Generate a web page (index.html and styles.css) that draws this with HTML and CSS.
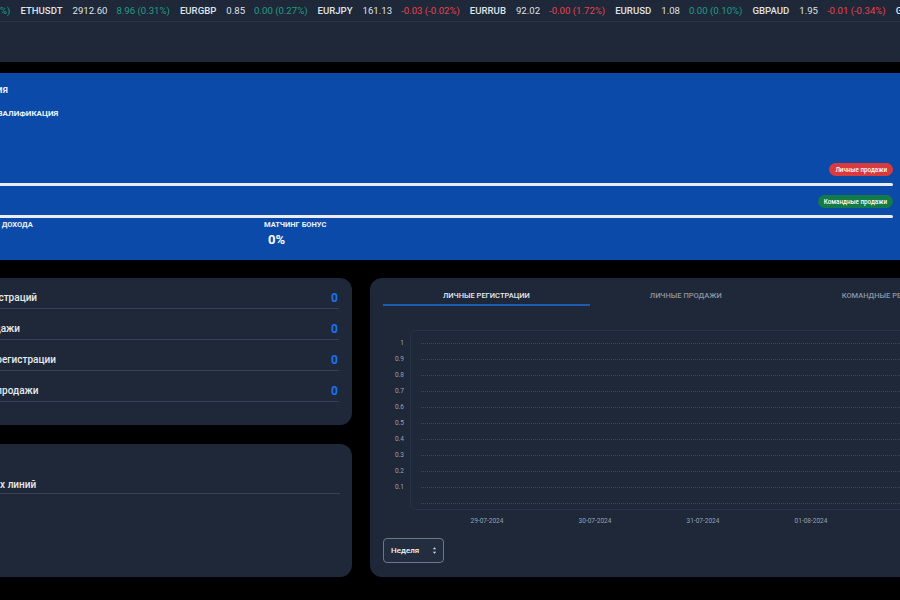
FILE: index.html
```html
<!DOCTYPE html>
<html lang="ru">
<head>
<meta charset="utf-8">
<title>Dashboard</title>
<link rel="stylesheet" href="styles.css">
</head>
<body>
<div class="page">
  <header class="topbar">
    <div class="ticker">
      <div class="tape">
        <div class="tick"><span class="sym">BTCUSDT</span><span class="val">66812.40</span><span class="chg up">120.35 (0.18%)</span></div>
        <div class="tick"><span class="sym">ETHUSDT</span><span class="val">2912.60</span><span class="chg up">8.96 (0.31%)</span></div>
        <div class="tick"><span class="sym">EURGBP</span><span class="val">0.85</span><span class="chg up">0.00 (0.27%)</span></div>
        <div class="tick"><span class="sym">EURJPY</span><span class="val">161.13</span><span class="chg down">-0.03 (-0.02%)</span></div>
        <div class="tick"><span class="sym">EURRUB</span><span class="val">92.02</span><span class="chg down">-0.00 (1.72%)</span></div>
        <div class="tick"><span class="sym">EURUSD</span><span class="val">1.08</span><span class="chg up">0.00 (0.10%)</span></div>
        <div class="tick"><span class="sym">GBPAUD</span><span class="val">1.95</span><span class="chg down">-0.01 (-0.34%)</span></div>
        <div class="tick"><span class="sym">GBPUSD</span><span class="val">1.28</span><span class="chg up">0.00 (0.05%)</span></div>
      </div>
    </div>
  </header>

  <main class="main">
    <section class="qual">
      <div class="q-title">Квалификация</div>
      <div class="q-sub">СЛЕДУЮЩАЯ КВАЛИФИКАЦИЯ</div>
      <div class="badge-row"><span class="badge red">Личные продажи</span></div>
      <div class="bar"></div>
      <div class="badge-row second"><span class="badge green">Командные продажи</span></div>
      <div class="bar"></div>
      <div class="stats">
        <div class="stat"><div class="stat-label">БОНУС ЛИЧНОГО ДОХОДА</div></div>
        <div class="stat"><div class="stat-label">МАТЧИНГ БОНУС</div><div class="stat-val">0%</div></div>
      </div>
    </section>

    <div class="grid">
      <div class="left-col">
        <div class="card list-card">
          <div class="row"><span>Личных регистраций</span><span class="num">0</span></div>
          <div class="row"><span>Личные продажи</span><span class="num">0</span></div>
          <div class="row"><span>Командные регистрации</span><span class="num">0</span></div>
          <div class="row"><span>Командные продажи</span><span class="num">0</span></div>
        </div>
        <div class="card lines-card">
          <div class="row"><span>Число первых линий</span></div>
        </div>
      </div>

      <div class="card chart-card">
        <div class="tabs">
          <div class="tab active">ЛИЧНЫЕ РЕГИСТРАЦИИ</div>
          <div class="tab">ЛИЧНЫЕ ПРОДАЖИ</div>
          <div class="tab">КОМАНДНЫЕ РЕГИСТРАЦИИ</div>
          <div class="tab">КОМАНДНЫЕ ПРОДАЖИ</div>
        </div>
        <div class="chart">
          <div class="yaxis">
            <div>1</div><div>0.9</div><div>0.8</div><div>0.7</div><div>0.6</div>
            <div>0.5</div><div>0.4</div><div>0.3</div><div>0.2</div><div>0.1</div>
          </div>
          <div class="plot">
            <div class="gl"></div><div class="gl"></div><div class="gl"></div><div class="gl"></div>
            <div class="gl"></div><div class="gl"></div><div class="gl"></div><div class="gl"></div>
            <div class="gl"></div><div class="gl"></div><div class="gl"></div>
          </div>
        </div>
        <div class="xaxis">
          <div class="xl">29-07-2024</div>
          <div class="xl">30-07-2024</div>
          <div class="xl">31-07-2024</div>
          <div class="xl">01-08-2024</div>
          <div class="xl">02-08-2024</div>
        </div>
        <div class="select">
          <span>Неделя</span>
          <svg class="arrows" width="5" height="9" viewBox="0 0 5 9">
            <path d="M0.8 3.2 L2.5 1.2 L4.2 3.2 Z" fill="#d8dce3"/>
            <path d="M0.8 5.8 L2.5 7.8 L4.2 5.8 Z" fill="#d8dce3"/>
          </svg>
        </div>
      </div>
    </div>
  </main>
</div>
</body>
</html>
```

FILE: styles.css
```css
* { box-sizing: border-box; }

html, body {
  margin: 0;
  padding: 0;
  background: #000;
  width: 900px;
  height: 600px;
  overflow: hidden;
  font-family: Roboto, "Noto Sans", "Liberation Sans", sans-serif;
}

.page {
  margin-left: -74px;
  width: 1150px;
}

/* ---------- top bar / ticker ---------- */
.topbar {
  height: 62px;
  background: #1e2839;
}

.ticker {
  height: 22px;
  border-bottom: 1px solid #2a3446;
  overflow: hidden;
}

.tape {
  display: flex;
  align-items: center;
  height: 21px;
  white-space: nowrap;
  font-size: 9.6px;
  transform: translateX(-81px);
}

.tick {
  display: flex;
  gap: 10px;
  margin-right: 10px;
}

.tick .val + .chg { margin-left: -1px; }

.sym { color: #dfe2e8; font-weight: 500; }
.val { color: #dfe2e8; }
.chg.up { color: #1f9e85; }
.chg.down { color: #e8424f; }

/* ---------- main ---------- */
.main {
  width: 979px;
  padding-top: 11px;
}

.qual {
  background: #0b4aa8;
  height: 187px;
  padding: 12px 12px 0 12px;
  color: #fff;
}

.q-title {
  font-size: 10px;
  line-height: 10px;
  font-weight: 600;
  color: #eef2fb;
}

.q-sub {
  margin-top: 14px;
  font-size: 8px;
  line-height: 10px;
  font-weight: 700;
  color: #eef2fb;
}

.badge-row {
  display: flex;
  justify-content: flex-end;
  margin-top: 44px;
  height: 13px;
}

.badge-row.second { margin-top: 9px; }

.badge {
  display: inline-flex;
  align-items: center;
  height: 13px;
  padding: 0 6px;
  border-radius: 7px;
  font-size: 6.3px;
  font-weight: 500;
  color: #fff;
}

.badge.red { background: #d93a3d; }
.badge.green { background: #137a48; }

.bar {
  margin-top: 7px;
  height: 3px;
  border-radius: 2px;
  background: #e9ecf2;
}

.stats {
  display: grid;
  grid-template-columns: 326px 326px;
  margin-top: 3px;
}

.stat-label {
  font-size: 7.5px;
  line-height: 8px;
  font-weight: 700;
  color: #eef2fb;
  white-space: nowrap;
}

.stat-val {
  margin-top: 4px;
  padding-left: 4px;
  font-size: 13px;
  line-height: 14px;
  font-weight: 700;
  color: #fff;
}

/* ---------- lower grid ---------- */
.grid {
  display: grid;
  grid-template-columns: 426px 700px;
  column-gap: 18px;
  margin-top: 18px;
}

.left-col {
  display: flex;
  flex-direction: column;
  gap: 19px;
}

.card {
  background: #1e2839;
  border-radius: 12px;
}

.list-card {
  padding: 0 13px 23px 12px;
}

.row {
  display: flex;
  justify-content: space-between;
  align-items: center;
  padding: 12px 0 2px;
  line-height: 16px;
  border-bottom: 1px solid #364154;
  font-size: 10px;
  font-weight: 500;
  color: #e8eaee;
  white-space: nowrap;
}

.num {
  color: #1a73f0;
  font-weight: 700;
  font-size: 12px;
  padding-right: 1px;
}

.lines-card {
  height: 133px;
  padding: 33px 12px 0;
}

.lines-card .row {
  padding: 0;
}

/* ---------- chart card ---------- */
.chart-card {
  height: 299px;
  padding: 0 13px 14px;
}

.tabs {
  display: flex;
}

.tab {
  padding: 13px 60px 3px;
  font-size: 7.5px;
  line-height: 10px;
  font-weight: 500;
  color: #8e96a3;
  border-bottom: 2px solid transparent;
  white-space: nowrap;
}

.tab.active {
  color: #e8eaee;
  border-bottom-color: #1c5cb0;
}

.chart {
  display: flex;
  margin-top: 24px;
}

.yaxis {
  width: 21px;
  margin-right: 6px;
  padding-top: 5px;
  text-align: right;
  font-size: 6.5px;
  line-height: 16px;
  color: #9aa2ae;
}

.plot {
  flex: 1;
  height: 180px;
  border: 1px solid #263245;
  border-radius: 6px;
  padding: 12px 0 0 10px;
}

.gl {
  height: 16px;
  border-top: 1px dotted #3a465c;
}

.xaxis {
  display: flex;
  margin-left: 50px;
  margin-top: 6px;
}

.xl {
  width: 108px;
  text-align: center;
  font-size: 6.5px;
  line-height: 10px;
  color: #9aa2ae;
}

.select {
  margin-top: 12px;
  width: 61px;
  height: 25px;
  border: 1px solid #6f7786;
  border-radius: 4px;
  background: #222d3f;
  display: flex;
  align-items: center;
  justify-content: space-between;
  padding: 0 6px 0 7px;
  font-size: 8px;
  font-weight: 500;
  color: #f2f4f7;
}

.arrows { display: block; }
```
